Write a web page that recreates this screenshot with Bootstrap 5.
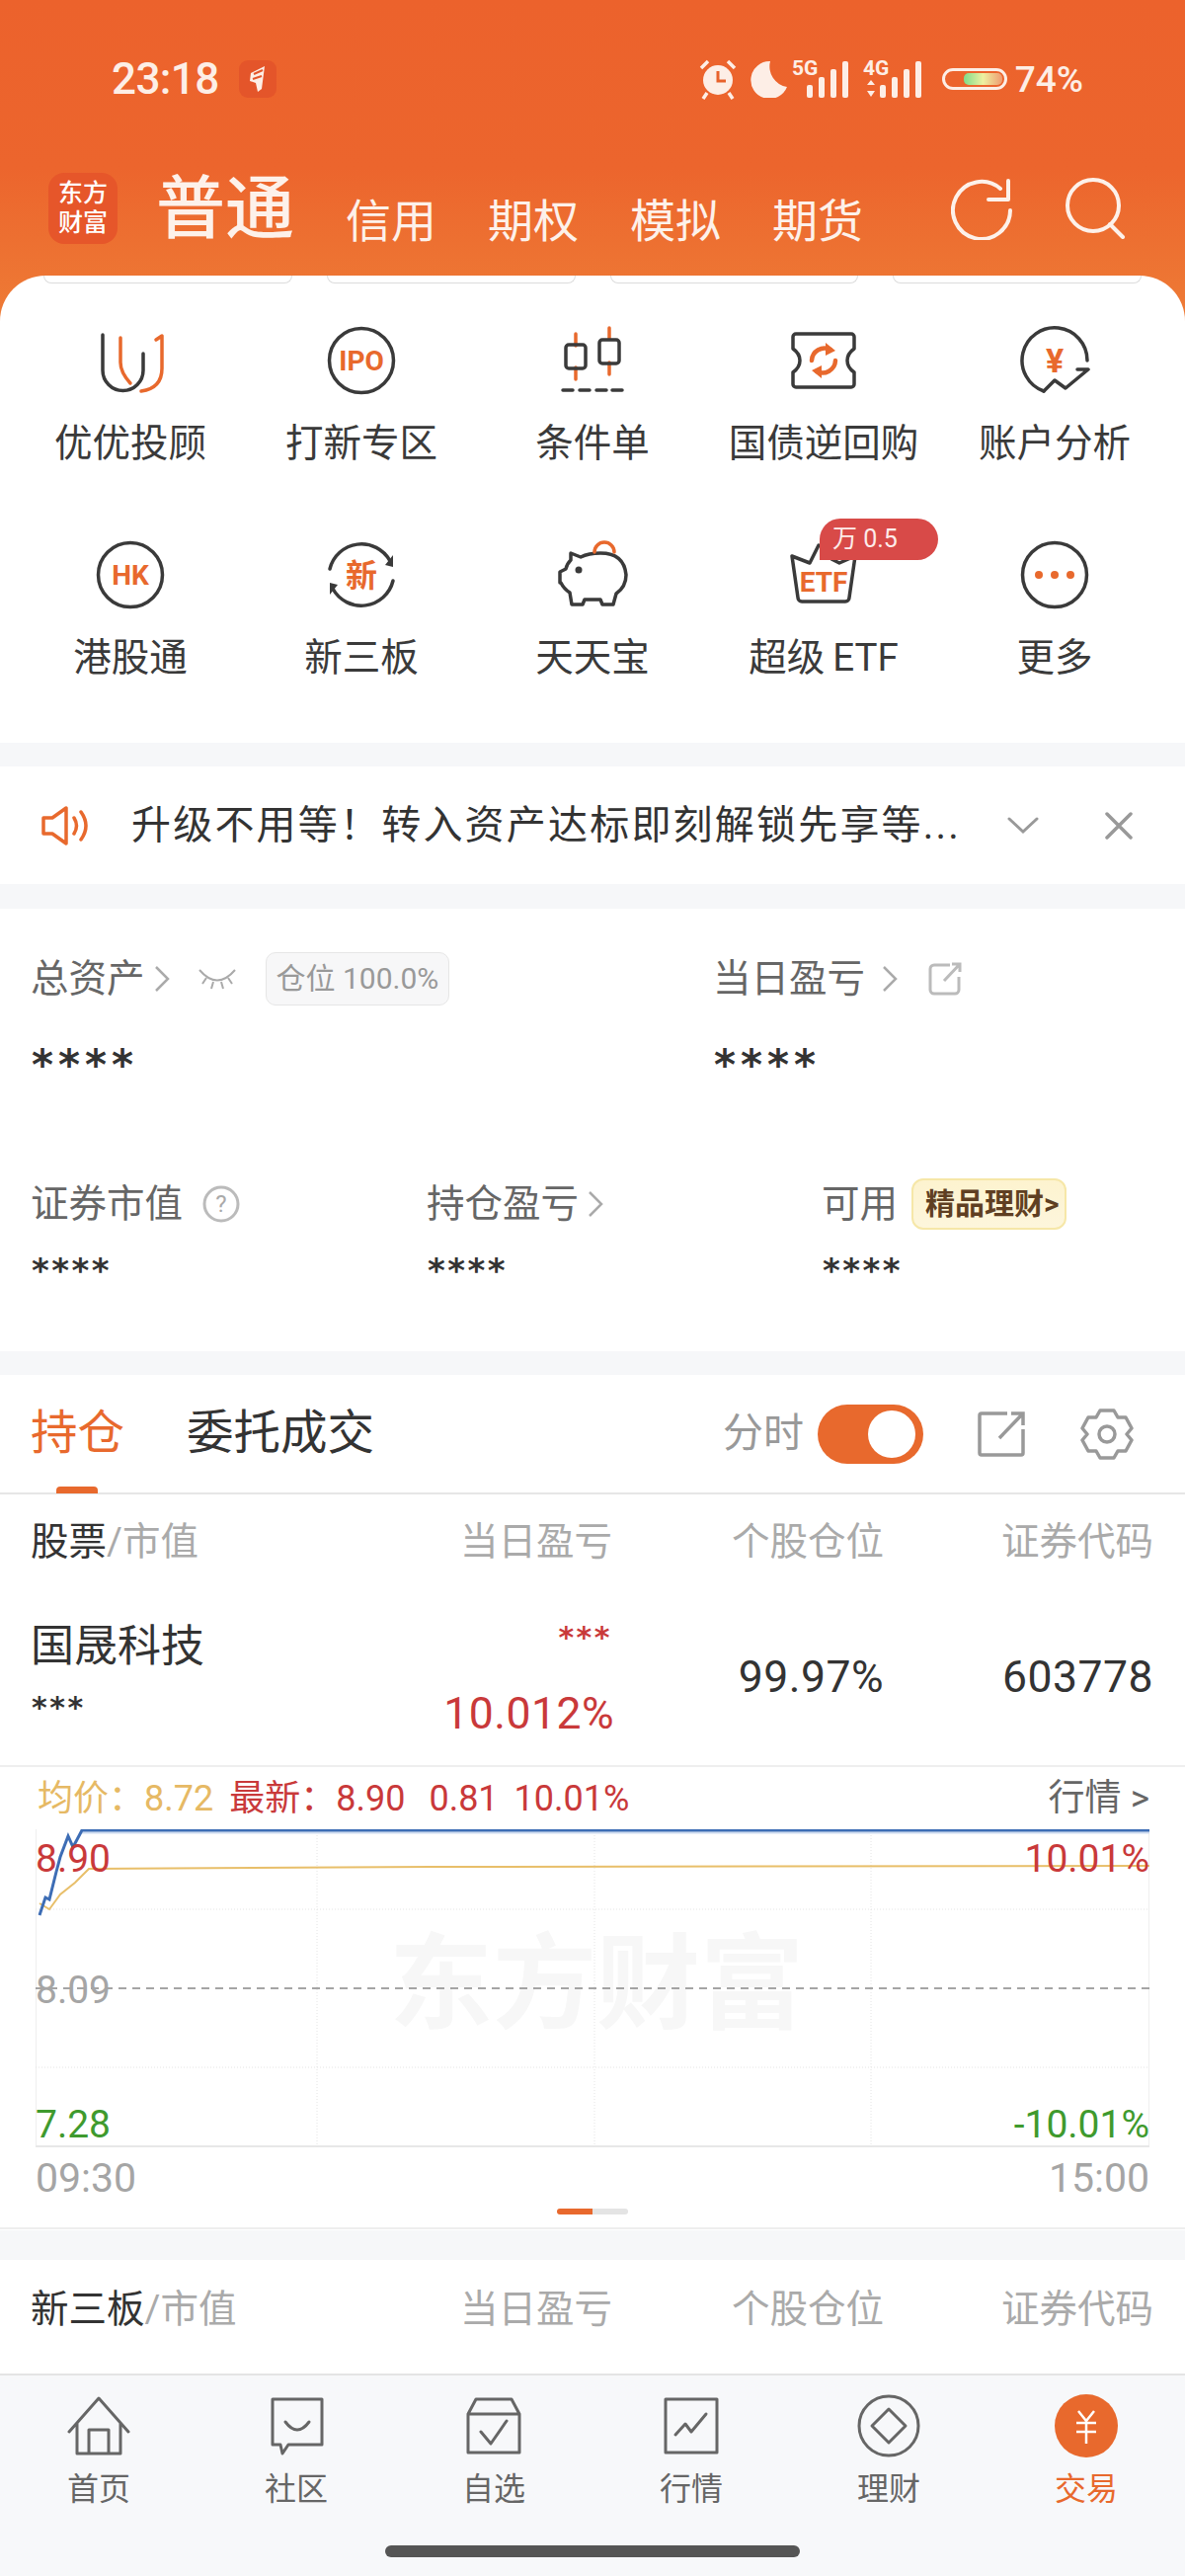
<!DOCTYPE html>
<html lang="zh-CN">
<head>
  <meta charset="UTF-8">
  <meta name="viewport" content="width=device-width, initial-scale=1">
  <title>交易</title>
  <link href="https://cdn.jsdelivr.net/npm/bootstrap@5.3.3/dist/css/bootstrap.min.css" rel="stylesheet">
  <style>
    html, body { height: 2608px; overflow: hidden; }
    body { font-family: Roboto, "Noto Sans CJK SC", sans-serif; background: #f6f7f9; color: #333; }
    svg { display: block; flex: none; }
    .ln { fill: none; stroke: #3a3a3a; stroke-width: 3.5; stroke-linecap: round; stroke-linejoin: round; }
    .ln-o { fill: none; stroke: #e8692d; stroke-width: 3.5; stroke-linecap: round; stroke-linejoin: round; }
    .ln-g { fill: none; stroke: #666; stroke-width: 3; stroke-linecap: round; stroke-linejoin: round; }
    .ico-txt { fill: #e8692d; font-weight: 700; text-anchor: middle; font-family: Roboto, "Noto Sans CJK SC", sans-serif; }

    .app-top { background: linear-gradient(#ec622c 0, #ec652d 170px, #ee7c36 330px) no-repeat; background-size: 100% 340px; }
    .status-row { height: 160px; padding: 0 103px 0 113px; color: #fdeee6; }
    .status-time { font-size: 44px; font-weight: 500; line-height: 1; letter-spacing: -.6px; }
    .status-app { width: 38px; height: 38px; margin-left: 20px; border-radius: 9px; background: #e4552a; }
    .status-bat { font-size: 37px; font-weight: 500; line-height: 1; margin-left: 8px; }
    .tab-row { height: 119px; padding: 0 60px 0 49px; color: #fdf1ea; }
    .logo-box { width: 70px; height: 72px; margin-top: 15px; border-radius: 16px; background: #e6562a; color: #fff; font-size: 25px; line-height: 30px; text-align: center; padding-top: 6px; font-weight: 500; }
    .tab-main { font-size: 70px; line-height: 68px; margin: 18px 52px 0 39px; font-weight: 500; }
    .tab-sub { font-size: 46px; line-height: 46px; margin: 41px 52px 0 0; }

    .svc-panel { background: #fff; border-radius: 46px 46px 0 0; height: 473px; padding: 0 44px; }
    .peek-row { gap: 35px; height: 50px; }
    .peek-item { flex: 1; height: 8px; border: 1px solid #dcdcdc; border-top: 0; border-radius: 0 0 22px 22px; }
    .svc-grid { margin: 0 -29px; row-gap: 75px; }
    .svc-cell { position: relative; height: 142px; }
    .svc-name { font-size: 38.5px; line-height: 46px; margin-top: 25px; color: #3a3a3a; white-space: nowrap; }
    .etf-tip { position: absolute; left: 113px; top: -21px; width: 120px; height: 42px; background: #d84a48; color: #fdecea; font-size: 25px; line-height: 42px; padding-left: 13px; border-radius: 21px 21px 21px 0; text-align: left; }

    .notice-bar { height: 119px; margin: 24px 0 25px; padding: 0 53px 0 42px; background: #fff; }
    .notice-text { font-size: 40px; letter-spacing: 2.2px; margin-left: 43px; color: #333; white-space: nowrap; }

    .asset-box { height: 448px; margin-bottom: 24px; background: #fff; padding-left: 31px; }
    .asset-lbl { font-size: 38.5px; line-height: 46px; color: #666; white-space: nowrap; }
    .stars-lg { font-family: "DejaVu Sans", sans-serif; font-weight: 700; font-size: 42px; line-height: 40px; letter-spacing: 5px; color: #333; margin-top: 41px; padding-left: 1px; }
    .stars-sm { font-family: "DejaVu Sans", sans-serif; font-weight: 700; font-size: 34px; line-height: 30px; letter-spacing: 2.5px; color: #333; margin-top: 25px; padding-left: 1px; }
    .stars-xs { font-size: 30px; text-align: left; margin-top: 20px; }
    .pos-tag { height: 54px; margin-left: 29px; padding: 0 10px; background: #f7f7f8; border: 1px solid #e6e6e6; border-radius: 10px; font-size: 30px; line-height: 52px; color: #999; }
    .gold-tag { height: 52px; margin-left: 14px; padding: 0 5px 0 12px; background: linear-gradient(#fdf3cf, #fdf6dc); border: 2px solid #f6e7a8; border-radius: 12px; font-size: 30px; line-height: 48px; color: #5f3f22; font-weight: 700; }

    .hold-box { height: 866px; background: #fff; }
    .hold-tabs { height: 121px; padding: 0 52px 0 31px; border-bottom: 2px solid #e6e6e6; position: relative; }
    .hold-on { font-size: 47.5px; color: #e8692d; }
    .hold-off { font-size: 47.5px; color: #333; margin-left: 63px; }
    .hold-bar { position: absolute; left: 57px; bottom: -1px; width: 42px; height: 7px; border-radius: 4px 4px 0 0; background: #e8692d; }
    .sw-lbl { font-size: 41px; color: #999; }
    .sw-track { width: 107px; height: 60px; margin: 0 55px 0 14px; border-radius: 30px; background: #e8692d; position: relative; }
    .sw-thumb { position: absolute; right: 8px; top: 6px; width: 48px; height: 48px; border-radius: 50%; background: #fff; }
    .hold-cols { display: grid; grid-template-columns: 301px 288px 275px 273px; padding: 0 31px; align-items: center; }
    .hold-head { height: 96px; font-size: 38.5px; color: #aaa; text-align: right; }
    .hold-head > :first-child { text-align: left; }
    .hold-dark { color: #333; }
    .hold-line { height: 180px; border-bottom: 2px solid #eee; font-size: 44.5px; text-align: right; color: #333; letter-spacing: .5px; }
    .stock-name { font-size: 44px; line-height: 54px; text-align: left; margin-top: -12px; letter-spacing: 0; }
    .red-txt { color: #c9393a; }
    .chart-head { height: 64px; padding: 0 36px 0 38px; font-size: 36px; white-space: nowrap; margin-bottom: -1px; }
    .avg-txt { color: #e6b964; }
    .chart-wrap { position: relative; margin: 0 36px; height: 322px; }
    .chart-lbl { position: absolute; font-size: 39px; line-height: 44px; }
    .chart-mark { position: absolute; left: 358px; top: 100px; font-size: 105px; line-height: 116px; font-weight: 700; color: #f7f7f7; white-space: nowrap; }
    .chart-foot { height: 62px; padding: 9px 36px 0 36px; font-size: 41px; line-height: 44px; color: #a5a5a5; }
    .pager-on, .pager-off { width: 36px; height: 6px; }
    .pager-on { background: #e8692d; border-radius: 3px 0 0 3px; }
    .pager-off { background: #e4e4e4; border-radius: 0 3px 3px 0; }
    .hold-rule { height: 15px; border-bottom: 2px solid #eee; }

    .next-box { height: 115px; margin-top: 30px; background: #fff; }
    .next-box .hold-head { height: 100px; }
    .tabbar { height: 205px; border-top: 2px solid #e4e4e4; background: #f7f8fa; position: relative; }
    .tabbar-cell { padding-top: 19px; height: 136px; font-size: 32px; line-height: 40px; color: #666; }
    .tabbar-cell svg { margin-bottom: 12px; }
    .tabbar-on { color: #e8692d; }
    .home-bar { position: absolute; left: 390px; top: 172px; width: 420px; height: 12px; border-radius: 6px; background: #555; }
  </style>
</head>
<body>
  <div class="app-top">
    <div class="status-row d-flex align-items-center">
      <span class="status-time">23:18</span>
      <span class="status-app d-flex align-items-center justify-content-center">
        <svg width="22" height="28" viewBox="0 0 22 28"><path d="M4 8 18 1 15 24 11 27 9 18 3 16Z" fill="#fdeee6"/><path d="M7 9 16 5M6 14 15 11" stroke="#e4552a" stroke-width="2"/></svg>
      </span>
      <span class="ms-auto d-flex align-items-center">
        <svg width="38" height="42" viewBox="0 0 38 42"><circle cx="19" cy="22" r="15" fill="#fdeee6"/><path d="M19 13v10h8" fill="none" stroke="#e8622c" stroke-width="3"/><path d="M2 10 9 3M36 10 29 3M8 35 4 41M30 35 34 41" stroke="#fdeee6" stroke-width="3.5"/></svg>
        <svg style="margin-left:14px" width="38" height="38" viewBox="0 0 38 38"><path d="M20 1A19 19 0 1 0 37 27 21 21 0 0 1 20 1Z" fill="#fdeee6"/></svg>
        <svg class="ms-1" width="62" height="48" viewBox="0 0 62 48" fill="#fdeee6"><text x="0" y="20" font-size="21" font-weight="700" font-family="Roboto">5G</text><rect x="15" y="30" width="6" height="13" rx="2"/><rect x="27" y="22" width="6" height="21" rx="2"/><rect x="39" y="14" width="6" height="29" rx="2"/><rect x="51" y="6" width="6" height="37" rx="2"/></svg>
        <svg style="margin-left:10px" width="62" height="48" viewBox="0 0 62 48" fill="#fdeee6"><text x="0" y="20" font-size="21" font-weight="700" font-family="Roboto">4G</text><path d="M4 30h8l-4-5ZM4 36h8l-4 6Z"/><rect x="17" y="30" width="6" height="13" rx="2"/><rect x="29" y="22" width="6" height="21" rx="2"/><rect x="41" y="14" width="6" height="29" rx="2"/><rect x="53" y="6" width="6" height="37" rx="2"/></svg>
        <svg style="margin-left:18px" width="66" height="22" viewBox="0 0 66 22"><defs><linearGradient id="batg"><stop offset="0" stop-color="#7fdc8a"/><stop offset=".5" stop-color="#eef0a0"/><stop offset="1" stop-color="#ef9a70"/></linearGradient></defs><rect x="1.5" y="1.5" width="63" height="19" rx="9.5" fill="none" stroke="#fdeee6" stroke-width="3"/><rect x="22" y="5" width="39" height="12" rx="5" fill="url(#batg)"/></svg>
        <span class="status-bat">74%</span>
      </span>
    </div>

    <div class="tab-row d-flex align-items-start">
      <div class="logo-box">东方<br>财富</div>
      <span class="tab-main">普通</span>
      <span class="tab-sub">信用</span>
      <span class="tab-sub">期权</span>
      <span class="tab-sub">模拟</span>
      <span class="tab-sub">期货</span>
      <svg class="ms-auto" style="margin-top:21px;margin-right:53px" width="62" height="62" viewBox="0 0 62 62" fill="none" stroke="#fdf1ea" stroke-width="4" stroke-linecap="round" stroke-linejoin="round"><path d="M50 10A29 29 0 1 0 60 32"/><path d="M58 2V21H38"/></svg>
      <svg style="margin-top:20px" width="62" height="62" viewBox="0 0 62 62" fill="none" stroke="#fdf1ea" stroke-width="4" stroke-linecap="round"><circle cx="29" cy="28" r="26"/><path d="M46 47 59 60"/></svg>
    </div>

    <div class="svc-panel">
      <div class="peek-row d-flex">
        <div class="peek-item"></div><div class="peek-item"></div><div class="peek-item"></div><div class="peek-item"></div>
      </div>
      <div class="svc-grid row row-cols-5 g-0 text-center">
        <div class="col svc-cell d-flex flex-column align-items-center">
          <svg width="72" height="72" viewBox="0 0 72 72"><path class="ln" d="M8 10V46a20.5 20.5 0 0 0 41 0V29"/><path class="ln-o" d="M26 13V38Q26 48 36 59M62 15 68 11V44Q68 64 47 67"/></svg>
          <div class="svc-name">优优投顾</div>
        </div>
        <div class="col svc-cell d-flex flex-column align-items-center">
          <svg width="72" height="72" viewBox="0 0 72 72"><circle class="ln" cx="36" cy="36" r="32.5"/><text class="ico-txt" x="36" y="46" font-size="28">IPO</text></svg>
          <div class="svc-name">打新专区</div>
        </div>
        <div class="col svc-cell d-flex flex-column align-items-center">
          <svg width="72" height="72" viewBox="0 0 72 72"><path class="ln-o" d="M19 9V21M19 43V55M53 3V14M53 38V50"/><rect class="ln" x="9" y="20" width="20" height="24" rx="3"/><rect class="ln" x="43" y="15" width="20" height="24" rx="3"/><path class="ln" d="M6 66h10M23 66h10M40 66h10M56 66h10"/></svg>
          <div class="svc-name">条件单</div>
        </div>
        <div class="col svc-cell d-flex flex-column align-items-center">
          <svg width="72" height="72" viewBox="0 0 72 72"><path class="ln" d="M8 9H64a3 3 0 0 1 3 3V24Q60 29 60 36T67 48V60a3 3 0 0 1-3 3H8a3 3 0 0 1-3-3V48Q12 43 12 36T5 24V12a3 3 0 0 1 3-3Z"/><path class="ln-o" style="stroke-width:4.5" d="M24 36a13 13 0 0 1 19-11M48 36a13 13 0 0 1-19 11"/><path d="M38 18 48 26 38 31ZM34 54 24 46 34 41Z" fill="#e8692d"/></svg>
          <div class="svc-name">国债逆回购</div>
        </div>
        <div class="col svc-cell d-flex flex-column align-items-center">
          <svg width="72" height="72" viewBox="0 0 72 72"><path class="ln" d="M25 67A33 33 0 1 1 69 36"/><path class="ln" d="M25 67 36 56 47 64 70 45 59 45"/><text class="ico-txt" x="36" y="48" font-size="34">¥</text></svg>
          <div class="svc-name">账户分析</div>
        </div>

        <div class="col svc-cell d-flex flex-column align-items-center">
          <svg width="72" height="72" viewBox="0 0 72 72"><circle class="ln" cx="36" cy="36" r="32.5"/><text class="ico-txt" x="36" y="46" font-size="28">HK</text></svg>
          <div class="svc-name">港股通</div>
        </div>
        <div class="col svc-cell d-flex flex-column align-items-center">
          <svg width="72" height="72" viewBox="0 0 72 72"><path class="ln" d="M4 30A33 33 0 0 1 65 22M68 42A33 33 0 0 1 7 50"/><path d="M68 28 60 26 68 16ZM4 44 12 46 4 56Z" fill="#3a3a3a"/><text class="ico-txt" x="36" y="48" font-size="32">新</text></svg>
          <div class="svc-name">新三板</div>
        </div>
        <div class="col svc-cell d-flex flex-column align-items-center">
          <svg width="72" height="72" viewBox="0 0 72 72"><path class="ln" d="M14 14 24 18Q32 14 44 14 68 14 70 36 70 48 60 55L57 66H46L44 61H28L26 66H15L13 54Q7 50 4 44H3V33L9 30Q10 25 14 21Z"/><circle cx="22" cy="31" r="3.5" fill="#3a3a3a"/><path class="ln-o" d="M38 13A10 10 0 0 1 58 13"/></svg>
          <div class="svc-name">天天宝</div>
        </div>
        <div class="col svc-cell d-flex flex-column align-items-center">
          <svg width="72" height="72" viewBox="0 0 72 72"><path class="ln" d="M31 6 22 24 4 17 10 59a4 4 0 0 0 4 4H58a4 4 0 0 0 4-4L68 17 52 24 44 20"/><text class="ico-txt" x="36" y="53" font-size="28">ETF</text></svg>
          <div class="svc-name">超级&thinsp;ETF</div>
          <span class="etf-tip">万 0.5</span>
        </div>
        <div class="col svc-cell d-flex flex-column align-items-center">
          <svg width="72" height="72" viewBox="0 0 72 72"><circle class="ln" cx="36" cy="36" r="32.5"/><circle cx="20" cy="36" r="4" fill="#e8692d"/><circle cx="36" cy="36" r="4" fill="#e8692d"/><circle cx="52" cy="36" r="4" fill="#e8692d"/></svg>
          <div class="svc-name">更多</div>
        </div>
      </div>
    </div>
  </div>

  <div class="notice-bar d-flex align-items-center">
    <svg width="48" height="42" viewBox="0 0 48 42" fill="none" stroke-width="3.5" stroke-linejoin="round" stroke-linecap="round"><path stroke="#e8692d" d="M2 13H11L25 3V39L11 29H2Z"/><path stroke="#e8692d" d="M33 13Q38 21 33 29M40 7Q50 21 40 35"/></svg>
    <span class="notice-text">升级不用等！转入资产达标即刻解锁先享等...</span>
    <svg class="ms-auto" width="32" height="20" viewBox="0 0 32 20" fill="none" stroke="#999" stroke-width="3" stroke-linecap="round"><path d="M2 3 16 16 30 3"/></svg>
    <svg style="margin-left:67px" width="28" height="28" viewBox="0 0 28 28" fill="none" stroke="#999" stroke-width="3.5" stroke-linecap="round"><path d="M2 2 26 26M26 2 2 26"/></svg>
  </div>

  <div class="asset-box">
    <div class="row g-0" style="padding-top:44px;height:212px">
      <div class="col-auto" style="width:691px">
        <div class="d-flex align-items-center">
          <span class="asset-lbl">总资产</span>
          <svg class="ms-2" width="18" height="28" viewBox="0 0 18 28" fill="none" stroke="#aaa" stroke-width="2.5"><path d="M3 2 15 14 3 26"/></svg>
          <svg style="margin-left:27px" width="40" height="24" viewBox="0 0 40 24" fill="none" stroke="#aaa" stroke-width="2"><path d="M2 3Q20 24 38 3M9 11 5 17M16 15 14 22M24 15 26 22M31 11 35 17"/></svg>
          <span class="pos-tag">仓位 100.0%</span>
        </div>
        <div class="stars-lg">****</div>
      </div>
      <div class="col">
        <div class="d-flex align-items-center" style="height:54px">
          <span class="asset-lbl">当日盈亏</span>
          <svg class="ms-3" width="18" height="28" viewBox="0 0 18 28" fill="none" stroke="#aaa" stroke-width="2.5"><path d="M3 2 15 14 3 26"/></svg>
          <svg style="margin-left:30px" width="34" height="34" viewBox="0 0 34 34" fill="none" stroke="#bbb" stroke-width="3"><path d="M22 3H6a4 4 0 0 0-4 4V28a4 4 0 0 0 4 4H27a4 4 0 0 0 4-4V15M16 19 32 2M24 2H32V10"/></svg>
        </div>
        <div class="stars-lg">****</div>
      </div>
    </div>
    <div class="row g-0" style="padding-top:60px">
      <div class="col-auto" style="width:401px">
        <div class="d-flex align-items-center" style="height:54px">
          <span class="asset-lbl">证券市值</span>
          <svg style="margin-left:20px" width="38" height="38" viewBox="0 0 38 38"><circle cx="19" cy="19" r="17" fill="none" stroke="#bbb" stroke-width="3"/><text x="19" y="27" text-anchor="middle" font-size="24" fill="#aaa" font-family="Roboto">?</text></svg>
        </div>
        <div class="stars-sm">****</div>
      </div>
      <div class="col-auto" style="width:400px">
        <div class="d-flex align-items-center" style="height:54px">
          <span class="asset-lbl">持仓盈亏</span>
          <svg class="ms-2" width="18" height="28" viewBox="0 0 18 28" fill="none" stroke="#aaa" stroke-width="2.5"><path d="M3 2 15 14 3 26"/></svg>
        </div>
        <div class="stars-sm">****</div>
      </div>
      <div class="col-auto" style="width:336px">
        <div class="d-flex align-items-center" style="height:54px">
          <span class="asset-lbl">可用</span>
          <span class="gold-tag">精品理财&gt;</span>
        </div>
        <div class="stars-sm">****</div>
      </div>
    </div>
  </div>

  <div class="hold-box">
    <div class="hold-tabs d-flex align-items-center">
      <span class="hold-on">持仓</span>
      <span class="hold-off">委托成交</span>
      <span class="hold-bar"></span>
      <span class="sw-lbl ms-auto">分时</span>
      <span class="sw-track"><span class="sw-thumb"></span></span>
      <svg width="48" height="46" viewBox="0 0 48 46" fill="none" stroke="#999" stroke-width="3.5"><path d="M30 2H4a2 2 0 0 0-2 2V42a2 2 0 0 0 2 2H44a2 2 0 0 0 2-2V18M22 27 46 2M34 2H46V14"/></svg>
      <svg style="margin-left:56px" width="54" height="54" viewBox="0 0 54 54" fill="none" stroke="#999" stroke-width="3.5" stroke-linejoin="round"><path d="M20 3H34L38 10 46 10 52 21 47 27 52 33 46 44 38 44 34 51H20L16 44 8 44 2 33 7 27 2 21 8 10 16 10Z"/><circle cx="27" cy="27" r="8"/></svg>
    </div>
    <div class="hold-cols hold-head">
      <div><span class="hold-dark">股票</span>/市值</div>
      <div>当日盈亏</div><div>个股仓位</div><div>证券代码</div>
    </div>
    <div class="hold-cols hold-line">
      <div>
        <div class="stock-name">国晟科技</div>
        <div class="stars-sm stars-xs">***</div>
      </div>
      <div>
        <div class="stars-sm red-txt" style="font-size:30px;margin:6px 0 38px">***</div>
        <div class="red-txt" style="line-height:48px;margin-right:-2px">10.012%</div>
      </div>
      <div>99.97%</div>
      <div>603778</div>
    </div>
    <div class="chart-head d-flex align-items-center">
      <span class="avg-txt">均价：8.72</span>
      <span class="red-txt ms-3">最新：8.90</span>
      <span class="red-txt ms-4">0.81</span>
      <span class="red-txt ms-3">10.01%</span>
      <span class="ms-auto" style="color:#666;font-size:37px">行情 &gt;</span>
    </div>
    <div class="chart-wrap">
      <div class="chart-mark">东方财富</div>
      <svg class="position-absolute top-0 start-0" width="1128" height="322" viewBox="0 0 1128 322" fill="none">
        <path d="M0.5 0V322M1127.5 0V322" stroke="#eee"/>
        <path d="M0 321H1128" stroke="#e8e8e8" stroke-width="2"/>
        <path d="M0 81H1128M0 241H1128M285 0V322M566 0V322M846 0V322" stroke="#e4e4e4" stroke-dasharray="1 2"/>
        <path d="M0 161H1128" stroke="#888" stroke-width="1.5" stroke-dasharray="8 6"/>
        <path d="M47 3.5H1128" stroke="#cfdcf0" stroke-width="2"/>
        <polyline points="4,75 14,81 25,66 40,54 54,40 400,38 1128,37" stroke="#e8bf6a" stroke-width="2"/>
        <polyline points="4,87 10,69 14,71 21,43 25,28 33,7 38,18 47,1 1128,1" stroke="#3d6db5" stroke-width="3"/>
      </svg>
      <span class="chart-lbl red-txt" style="left:0;top:8px">8.90</span>
      <span class="chart-lbl red-txt" style="right:0;top:8px">10.01%</span>
      <span class="chart-lbl" style="left:0;top:141px;color:#a5a5a5">8.09</span>
      <span class="chart-lbl" style="left:0;top:277px;color:#3f9a2e">7.28</span>
      <span class="chart-lbl" style="right:0;top:277px;color:#3f9a2e">-10.01%</span>
    </div>
    <div class="chart-foot d-flex justify-content-between"><span>09:30</span><span>15:00</span></div>
    <div class="d-flex justify-content-center"><span class="pager-on"></span><span class="pager-off"></span></div>
    <div class="hold-rule"></div>
  </div>

  <div class="next-box">
    <div class="hold-cols hold-head">
      <div><span class="hold-dark">新三板</span>/市值</div>
      <div>当日盈亏</div><div>个股仓位</div><div>证券代码</div>
    </div>
  </div>

  <div class="tabbar">
    <div class="row row-cols-6 g-0 text-center">
      <div class="col tabbar-cell d-flex flex-column align-items-center">
        <svg width="64" height="64" viewBox="0 0 64 64"><path class="ln-g" d="M2 38 32 4 62 38M10 29V60H54V29M22 60V36H42V60"/></svg>首页
      </div>
      <div class="col tabbar-cell d-flex flex-column align-items-center">
        <svg width="64" height="64" viewBox="0 0 64 64"><path class="ln-g" d="M8 5H58V51H24L18 60 16 51H8ZM21 28Q33 44 45 28"/></svg>社区
      </div>
      <div class="col tabbar-cell d-flex flex-column align-items-center">
        <svg width="64" height="64" viewBox="0 0 64 64"><path class="ln-g" d="M14 5H50L58 20V59H6V20ZM6 20H58M19 38 29 50 45 27"/></svg>自选
      </div>
      <div class="col tabbar-cell d-flex flex-column align-items-center">
        <svg width="64" height="64" viewBox="0 0 64 64"><path class="ln-g" d="M6 5H58V59H6ZM16 41 26 30 32 38 47 20"/></svg>行情
      </div>
      <div class="col tabbar-cell d-flex flex-column align-items-center">
        <svg width="64" height="64" viewBox="0 0 64 64"><circle class="ln-g" cx="32" cy="32" r="30"/><path class="ln-g" d="M32 15 49 32 32 49 15 32Z"/></svg>理财
      </div>
      <div class="col tabbar-cell tabbar-on d-flex flex-column align-items-center">
        <svg width="64" height="64" viewBox="0 0 64 64"><circle cx="32" cy="32" r="32" fill="#e8692d"/><path d="M24 17 32 27 40 17M22 29H42M22 38H42M32 27V50" fill="none" stroke="#fff" stroke-width="2.5"/></svg>交易
      </div>
    </div>
    <div class="home-bar"></div>
  </div>

  <script src="https://cdn.jsdelivr.net/npm/bootstrap@5.3.3/dist/js/bootstrap.bundle.min.js"></script>
</body>
</html>
